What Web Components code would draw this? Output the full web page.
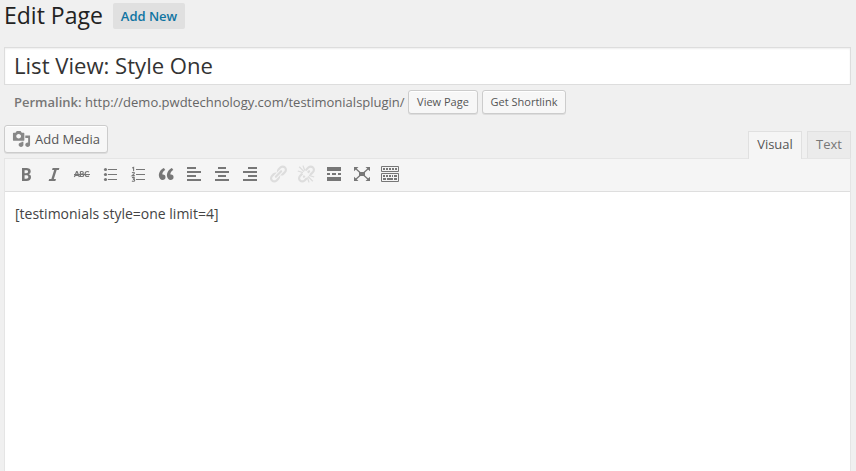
<!DOCTYPE html>
<html lang="en">
<head>
<meta charset="utf-8">
<title>Edit Page</title>
<style>
html,body{margin:0;height:100%}
body{background:#f0f0f0;font:13px/18px "Open Sans",sans-serif;color:#444;overflow:hidden}
</style>
</head>
<body>
<edit-screen></edit-screen>
<script>
const rects = list => list.map(([x,y,w,h]) => `<rect x="${x}" y="${y}" width="${w}" height="${h}"/>`).join('');
const LINK = '<path d="M17.74 2.76c1.68 1.69 1.68 4.41 0 6.1l-1.53 1.52c-1.12 1.12-2.7 1.47-4.14 1.09l2.62-2.61.76-.77.76-.76c.84-.84.84-2.2 0-3.04-.84-.85-2.2-.85-3.04 0l-.77.76-3.38 3.38c-.37-1.44-.02-3.02 1.1-4.14l1.52-1.53c1.69-1.68 4.42-1.68 6.1 0zM8.59 13.43l5.34-5.34c.42-.42.42-1.1 0-1.52-.44-.43-1.13-.39-1.53 0l-5.33 5.34c-.42.42-.42 1.1 0 1.52.44.43 1.13.39 1.52 0zm-.76 2.29l4.14-4.15c.38 1.44.03 3.02-1.09 4.14l-1.52 1.53c-1.69 1.68-4.41 1.68-6.1 0-1.68-1.68-1.68-4.42 0-6.1l1.53-1.52c1.12-1.12 2.7-1.47 4.14-1.1l-4.14 4.15c-.85.84-.85 2.2 0 3.05.84.84 2.2.84 3.04 0z"/>';
const ICONS = {
  bold: '<path d="M6 4v13h4.54c1.37 0 2.46-.33 3.26-1 .8-.66 1.2-1.58 1.2-2.77 0-.84-.17-1.51-.51-2.01s-.9-.85-1.67-1.03v-.09c.57-.1 1.02-.4 1.36-.9s.51-1.13.51-1.91c0-1.14-.39-1.98-1.17-2.5C12.75 4.26 11.5 4 9.78 4H6zm2.57 5.15V6.26h1.36c.73 0 1.27.11 1.61.32.34.22.51.58.51 1.07 0 .54-.16.92-.47 1.15s-.82.35-1.51.35h-1.5zm0 2.19h1.6c1.44 0 2.16.53 2.16 1.61 0 .6-.17 1.05-.51 1.34s-.86.43-1.57.43H8.57v-3.38z"/>',
  italic: '<path d="M14.78 6h-2.13l-2.8 9h2.12l-.62 2H4.6l.62-2h2.14l2.8-9H8.03l.62-2h6.75z"/>',
  strike: '<g fill="none" stroke="currentColor" stroke-width="1.2"><path d="M2.4 13 4.6 7.5h.5L7.3 13M3.2 11.4h3.2M8.4 7.5v5h1.8q1.4 0 1.4-1.3t-1.4-1.2H8.4M8.4 7.5h1.6q1.3 0 1.3 1.2T10 10M17 8q-.7-.5-1.7-.5-2.2 0-2.2 2.5t2.2 2.5q1 0 1.7-.5"/><path d="M2 10.5h16" stroke-width="1"/></g>',
  bullets: '<circle cx="5.5" cy="5.5" r="1.6"/><circle cx="5.5" cy="10.5" r="1.6"/><circle cx="5.5" cy="15.5" r="1.6"/>' + rects([[8,5,9,1],[8,10,9,1],[8,15,9,1]]),
  numbers: rects([[8,5,9,1],[8,10,9,1],[8,15,9,1]]) + '<path fill="none" stroke="currentColor" stroke-width="1.1" d="M4.2 4l1.4-.7V7M4 8.8q2.4-1.1 2.4.3 0 .8-2.2 2.5h2.6M4 13.6q2.4-.7 2.4.5 0 1-1.5 1 1.8 0 1.8 1.2 0 1.5-2.8.8"/>',
  quote: '<path d="M9.49 13.22c0-.74-.2-1.38-.61-1.9-.62-.78-1.83-.88-2.53-.72-.29-1.65 1.11-3.75 2.92-4.65L7.88 4c-2.73 1.3-5.42 4.28-4.96 8.05C3.21 14.43 4.59 16 6.54 16c.85 0 1.56-.25 2.12-.75s.83-1.18.83-2.03zm8.05 0c0-.74-.2-1.38-.61-1.9-.63-.78-1.83-.88-2.53-.72-.29-1.65 1.11-3.75 2.92-4.65L15.93 4c-2.73 1.3-5.41 4.28-4.95 8.05.29 2.38 1.66 3.95 3.61 3.95.85 0 1.56-.25 2.12-.75s.83-1.18.83-2.03z"/>',
  left: rects([[3,3,9,2],[3,7,14,2],[3,11,9,2],[3,15,14,2]]),
  center: rects([[6,3,8,2],[3,7,14,2],[6,11,8,2],[3,15,14,2]]),
  right: rects([[8,3,9,2],[3,7,14,2],[8,11,9,2],[3,15,14,2]]),
  link: LINK,
  unlink: '<mask id="m"><rect width="20" height="20" fill="#fff"/><path d="M4 4l12 12" stroke="#000" stroke-width="4.5"/></mask><g mask="url(#m)">' + LINK + '</g><path fill="none" stroke="currentColor" stroke-width="1.3" d="M8 7.6L3.2 2.8M8.8 6.6L7 1.6M7 8.7L1.8 7M12 12.4l4.8 4.8M11.4 13.4l1.6 5M13 11.3l5.2 1.7"/>',
  more: rects([[3,3,14,4],[3,9,3,2],[8,9,4,2],[14,9,3,2],[3,13,14,4]]),
  full: '<rect x="7" y="8" width="6" height="4"/><path d="M2 3h4.5L2 7.2zM18 3h-4.5L18 7.2zM2 17h4.5L2 12.8zM18 17h-4.5l4.5-4.2z"/><path fill="none" stroke="currentColor" stroke-width="1.3" d="M3 4l5 4.5M17 4l-5 4.5M3 16l5-4.5M17 16l-5-4.5"/>',
  sink: '<path fill="none" stroke="currentColor" d="M1.5 2.5h17v5h-17zM1.5 9.5h17v8h-17z"/>' + rects([[3,4,2,2],[6,4,2,2],[9,4,2,2],[12,4,2,2],[15,4,2,2],[3,11,2,2],[6,11,2,2],[9,11,2,2],[12,11,1,2],[14,11,3,2],[3,14,3,2],[7,14,6,2],[14,14,3,2]]),
  media: '<path d="M13 11V4c0-.55-.45-1-1-1h-1.67L9 1H5L3.67 3H2c-.55 0-1 .45-1 1v7c0 .55.45 1 1 1h10c.55 0 1-.45 1-1zM7 4.5c1.38 0 2.5 1.12 2.5 2.5S8.38 9.5 7 9.5 4.5 8.38 4.5 7 5.62 4.5 7 4.5zM14 6h5v10.5c0 1.38-1.12 2.5-2.5 2.5S14 17.88 14 16.5s1.12-2.5 2.5-2.5c.17 0 .34.02.5.05V9h-3V6zm-4 8.05V13h2v3.5c0 1.38-1.12 2.5-2.5 2.5S7 17.88 7 16.5 8.12 14 9.5 14c.17 0 .34.02.5.05z"/>'
};
const define = (name, html) => customElements.define(name, class extends HTMLElement {
  constructor() {
    super();
    this.attachShadow({mode: 'open'}).innerHTML = html;
  }
});

customElements.define('dash-icon', class extends HTMLElement {
  connectedCallback() {
    if (this.shadowRoot) return;
    this.attachShadow({mode: 'open'}).innerHTML = `<style>:host{display:block;width:20px;height:20px;flex:none}svg{display:block;width:100%;height:100%;fill:currentColor}</style><svg viewBox="0 0 20 20" preserveAspectRatio="none">${ICONS[this.getAttribute('name')]}</svg>`;
  }
});

define('wp-button', `<style>
:host{display:block;flex:none;box-sizing:border-box}
button{all:unset;box-sizing:border-box;width:100%;height:100%;display:flex;align-items:center;justify-content:center;gap:var(--gap,0);border:1px solid #ccc;border-radius:3px;background:#f7f7f7;box-shadow:0 1px 0 rgba(0,0,0,.08),inset 0 1px 0 #fff;color:#555;white-space:nowrap}
</style><button><slot></slot></button>`);

define('page-heading', `<style>
:host{display:flex;height:47px;padding-left:4px;box-sizing:border-box}
h1{margin:0;font-size:23px;line-height:30px;font-weight:400;color:#222;width:109px;white-space:nowrap}
a{margin-top:3px;width:72px;height:26px;box-sizing:border-box;border-radius:2px;background:#e0e0e0;color:#0f74a2;font-weight:600;line-height:26px;text-align:center}
</style><h1><slot></slot></h1><a>Add New</a>`);

define('title-field', `<style>
:host{display:block;box-sizing:border-box;height:38px;margin:0 5px 0 4px;padding:0 9px;border:1px solid #ddd;background:#fff;box-shadow:inset 0 1px 2px rgba(0,0,0,.07);font-size:22.1px;line-height:34px;color:#333}
</style><slot></slot>`);

define('permalink-row', `<style>
:host{display:flex;height:24px;padding:5px 0 0 14px;line-height:24px;color:#666}
.url{width:394px;white-space:nowrap}
b{font-weight:600;color:#777}
wp-button{height:24px;font-size:11px}
.view{width:70px;margin-right:4px}.short{width:84px}
</style><div class="url"><b>Permalink:</b> <slot></slot></div><wp-button class="view">View Page</wp-button><wp-button class="short">Get Shortlink</wp-button>`);

define('editor-tab', `<style>
:host{display:block;box-sizing:border-box;height:27px;border:1px solid #e0e0e0;border-bottom:0;background:#ebebeb;color:#777;text-align:center;line-height:24px}
:host([active]){height:28px;background:#f5f5f5;color:#555;position:relative}
</style><slot></slot>`);

define('editor-tools', `<style>
:host{display:flex;justify-content:space-between;height:44px;padding:0 5px 0 4px}
wp-button{width:104px;height:28px;margin-top:11px;--gap:4px}
dash-icon{width:19px;height:18px;color:#888}
.tabs{display:flex;gap:5px;margin-top:17px}
.v{width:54px}.t{width:44px}
</style><wp-button><dash-icon name="media"></dash-icon><span>Add Media</span></wp-button><div class="tabs"><editor-tab class="v" active>Visual</editor-tab><editor-tab class="t">Text</editor-tab></div>`);

define('editor-toolbar', `<style>
:host{display:flex;box-sizing:border-box;height:34px;gap:8px;padding:5px 0 0 11px;border-top:1px solid #e5e5e5;border-bottom:1px solid #dedede;background:#f5f5f5;color:#777}
.off{color:#ddd}
</style>` + ['bold','italic','strike','bullets','numbers','quote','left','center','right','link','unlink','more','full','sink'].map(n => `<dash-icon name="${n}"${n.endsWith('link') ? ' class="off"' : ''}></dash-icon>`).join(''));

define('editor-body', `<style>
:host{display:flex;flex-direction:column;flex:1;margin:0 5px 0 4px;border:solid #e5e5e5;border-width:0 1px;background:#fff}
p{margin:0;padding:11px 10px;font-size:14px;line-height:21px;color:#444}
</style><editor-toolbar></editor-toolbar><p><slot></slot></p>`);

define('edit-screen', `<style>:host{display:flex;flex-direction:column;height:471px}</style>
<page-heading>Edit Page</page-heading>
<title-field>List View: Style One</title-field>
<permalink-row>http://demo.pwdtechnology.com/testimonialsplugin/</permalink-row>
<editor-tools></editor-tools>
<editor-body>[testimonials style=one limit=4]</editor-body>`);
</script>
</body>
</html>
